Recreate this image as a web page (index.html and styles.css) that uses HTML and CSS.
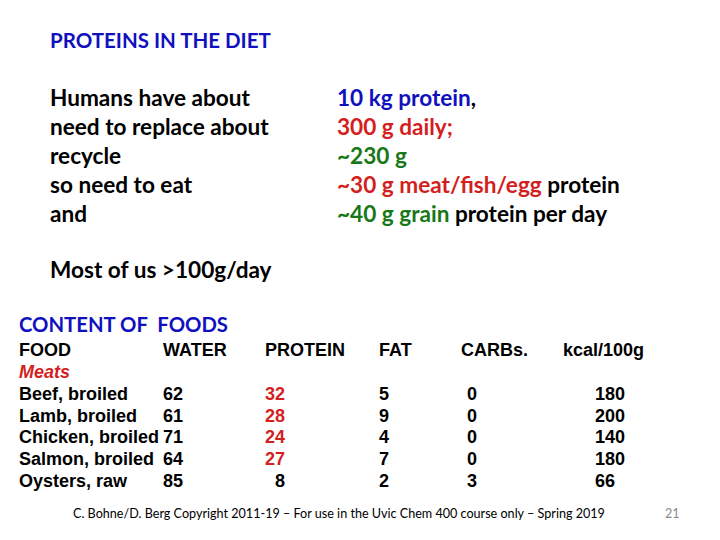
FILE: index.html
```html
<!DOCTYPE html>
<html>
<head>
<meta charset="utf-8">
<link rel="stylesheet" href="styles.css">
</head>
<body>
<div class="slide">
  <h1 class="title">PROTEINS IN THE DIET</h1>
  <div class="intro">
    <div class="col-left">
      <div>Humans have about</div>
      <div>need to replace about</div>
      <div>recycle</div>
      <div>so need to eat</div>
      <div>and</div>
    </div>
    <div class="col-right">
      <div><span class="blue">10 kg protein</span>,</div>
      <div class="red">300 g daily;</div>
      <div class="green">~230 g</div>
      <div><span class="red">~30 g meat/fish/egg</span> protein</div>
      <div><span class="green">~40 g grain</span> protein per day</div>
    </div>
  </div>
  <p class="most">Most of us &gt;100g/day</p>
  <h2 class="content-title">CONTENT OF&nbsp; FOODS</h2>
  <div class="table">
    <div>FOOD</div><div>WATER</div><div>PROTEIN</div><div>FAT</div><div>CARBs.</div><div>kcal/100g</div>
    <div class="meats">Meats</div><div></div><div></div><div></div><div></div><div></div>
    <div>Beef, broiled</div><div>62</div><div class="red num">32</div><div>5</div><div class="carb">0</div><div class="kcal">180</div>
    <div>Lamb, broiled</div><div>61</div><div class="red num">28</div><div>9</div><div class="carb">0</div><div class="kcal">200</div>
    <div>Chicken, broiled</div><div>71</div><div class="red num">24</div><div>4</div><div class="carb">0</div><div class="kcal">140</div>
    <div>Salmon, broiled</div><div>64</div><div class="red num">27</div><div>7</div><div class="carb">0</div><div class="kcal">180</div>
    <div>Oysters, raw</div><div>85</div><div class="num">8</div><div>2</div><div class="carb">3</div><div class="kcal">66</div>
  </div>
  <div class="footer">
    <span class="copy">C. Bohne/D. Berg Copyright 2011-19 – For use in the Uvic Chem 400 course only – Spring 2019</span>
    <span class="page">21</span>
  </div>
</div>
</body>
</html>
```
FILE: styles.css
```css
html, body {
  margin: 0;
  padding: 0;
  background: #ffffff;
}
.slide {
  width: 720px;
  height: 540px;
  box-sizing: border-box;
  padding: 27px 0 0 0;
  font-family: Lato, "Open Sans", sans-serif;
  font-weight: bold;
  color: #000;
}
.blue { color: #1010bf; }
.red { color: #d41f1f; }
.green { color: #187818; }
.title {
  margin: 0 0 0 50px;
  font-size: 20.5px;
  line-height: 26px;
  font-weight: bold;
  color: #1010bf;
}
.intro {
  display: grid;
  grid-template-columns: 287px auto;
  margin: 31px 0 0 50px;
  font-size: 22.6px;
  line-height: 28.9px;
}
.most {
  margin: 27px 0 0 50px;
  font-size: 22.6px;
  line-height: 28.9px;
}
.content-title {
  margin: 27px 0 0 19px;
  font-size: 20.3px;
  line-height: 26px;
  font-weight: bold;
  color: #1010bf;
}
.table {
  display: grid;
  grid-template-columns: 144px 102px 114px 82px 102px auto;
  margin: 3px 0 0 19px;
  font-family: "Liberation Sans", Arial, sans-serif;
  font-size: 18px;
  line-height: 21.75px;
  font-weight: bold;
}
.table .meats {
  color: #d41f1f;
  font-style: italic;
}
.table .num {
  width: 20px;
  text-align: right;
}
.table .carb { padding-left: 6px; }
.table .kcal { padding-left: 32px; }
.footer {
  display: flex;
  margin: 13px 0 0 73px;
  font-size: 12.6px;
  line-height: 16px;
  font-weight: normal;
}
.copy { width: 592px; }
.page { color: #8a8a8a; }
```
